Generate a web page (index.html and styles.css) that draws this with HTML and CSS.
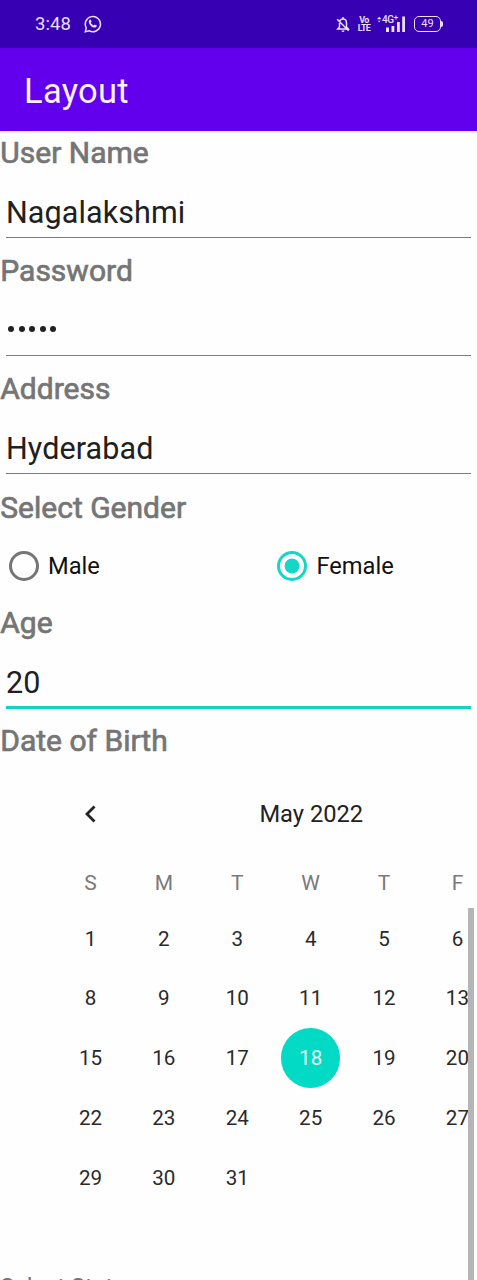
FILE: index.html
```
<!DOCTYPE html>
<html lang="en">
<head>
<meta charset="utf-8">
<title>Layout</title>
<link rel="stylesheet" href="styles.css">
</head>
<body>
<div class="screen">
  <header class="status">
    <span class="clock">3:48</span>
    <svg class="chat" width="18" height="18" viewBox="0 0 18 18" fill="none" stroke="currentColor" stroke-width="1.5">
      <path d="M1.3 16.7l1-3.8a7.6 7.6 0 1 1 2.8 2.8z"/>
      <path d="M5.2 5.2c.7-1 1.4-.9 1.8 0l.6 1.5-.8 1.1c.7 1.3 1.6 2.1 2.9 2.7l1.1-1 1.9 1c.4.3 0 1.3-.7 1.7-1.8 1.2-4.5-.4-5.9-2.3C4.800 8.300 4.400 6.500 5.200 5.200z" fill="currentColor" stroke="none"/>
    </svg>
    <span class="spacer"></span>
    <svg class="bell" width="14" height="17" viewBox="0 0 14 17" fill="none" stroke="currentColor" stroke-width="1.5">
      <path d="M3.500 11V7.200C3.500 4.600 5 3 7 3s3.500 1.600 3.500 4.200V11l1.800 2H1.700l1.800-2zM7 1v2M1.200 3.300l11.400 11.400"/>
      <path d="M5.500 14.600h3a1.500 1.500 0 0 1-3 0z" fill="currentColor" stroke="none"/>
    </svg>
    <span class="volte"><span>Vo</span><span>LTE</span></span>
    <span class="signal">
      <svg width="28" height="18" viewBox="0 0 28 18" fill="currentColor">
        <path d="M0 4.200l2.200-2.400 2.200 2.400zM.8 5.800h2.800l-1.400 1.400z"/>
        <path d="M9 12.500h3V17H9zM14.500 11h2.800v6h-2.800zM20 7h2.800v10H20zM25.200 1.500H28V17h-2.800z"/>
      </svg>
      <span class="net">4G<sup>+</sup></span>
    </span>
    <span class="battery">49</span>
  </header>
  <div class="appbar">Layout</div>
  <main class="form">
    <label class="label">User Name</label>
    <div class="input">Nagalakshmi</div>
    <label class="label">Password</label>
    <div class="input"><span class="dots"><i></i><i></i><i></i><i></i><i></i></span></div>
    <label class="label">Address</label>
    <div class="input">Hyderabad</div>
    <label class="label">Select Gender</label>
    <div class="radios">
      <div class="option"><span class="radio"></span>Male</div>
      <div class="option"><span class="radio on"></span>Female</div>
    </div>
    <label class="label">Age</label>
    <div class="input focus">20</div>
    <label class="label">Date of Birth</label>
    <section class="calendar">
      <div class="month">
        <svg class="prev" width="14" height="20" viewBox="0 0 14 20" fill="none" stroke="currentColor" stroke-width="2.800"><path d="M11.500 2.400L4 10l7.500 7.600"/></svg>
        <span class="title">May 2022</span>
      </div>
      <div class="grid names"><span>S</span><span>M</span><span>T</span><span>W</span><span>T</span><span>F</span></div>
      <div class="grid days">
        <span>1</span><span>2</span><span>3</span><span>4</span><span>5</span><span>6</span>
        <span>8</span><span>9</span><span>10</span><span>11</span><span>12</span><span>13</span>
        <span>15</span><span>16</span><span>17</span><span class="today">18</span><span>19</span><span>20</span>
        <span>22</span><span>23</span><span>24</span><span>25</span><span>26</span><span>27</span>
        <span>29</span><span>30</span><span>31</span>
      </div>
    </section>
    <label class="label plain">Select State</label>
  </main>
  <div class="scrollbar"></div>
</div>
</body>
</html>
```
FILE: styles.css
```
* { box-sizing: border-box; }
body { margin: 0; font-family: Roboto, "Noto Sans", sans-serif; }
.screen {
  position: relative;
  width: 477px;
  height: 1280px;
  overflow: hidden;
  background: #fefefe;
}
.status {
  display: flex;
  align-items: center;
  height: 48px;
  padding: 0 34px 0 35px;
  background: #3700b3;
  color: #e9dfff;
}
.clock { width: 49px; font-size: 18.500px; letter-spacing: 0.1px; }
.spacer { flex: 1; }
.volte {
  display: flex;
  flex-direction: column;
  width: 12px;
  margin: 0 7px 0 8px;
  font: 700 9px/8px Roboto, sans-serif;
  align-items: center;
  letter-spacing: -0.700px;
}
.volte span { white-space: nowrap; }
.signal { position: relative; width: 28px; height: 18px; margin-right: 9px; }
.net {
  position: absolute;
  left: 5px;
  top: 0;
  font-size: 10px;
  line-height: 10px;
  font-weight: 500;
  letter-spacing: -0.4px;
}
.net sup { font-size: 8px; line-height: 0; vertical-align: 3px; }
.battery {
  position: relative;
  width: 27px;
  height: 16px;
  margin-right: 2px;
  border: 1.500px solid currentColor;
  border-radius: 5px;
  font-size: 11px;
  line-height: 14px;
  text-align: center;
}
.battery::after {
  content: "";
  position: absolute;
  right: -3px;
  top: 4px;
  width: 2px;
  height: 6px;
  border-radius: 0 2px 2px 0;
  background: currentColor;
}
.appbar {
  height: 83px;
  padding-left: 24px;
  background: #6200ee;
  color: #f7f0ff;
  font-size: 34.500px;
  line-height: 86px;
  letter-spacing: 0.3px;
}
.form { box-shadow: inset 0 3px 3px -2px #d8cfe4; }
.label {
  display: block;
  height: 44px;
  padding-left: 0.300px;
  color: #757575;
  font-size: 30px;
  line-height: 44.500px;
  -webkit-text-stroke: 0.700px #757575;
}
.label.plain { height: 30px; font-size: 23.600px; line-height: 30px; -webkit-text-stroke: 0; }
.input {
  height: 63px;
  margin: 0 6px 11.200px;
  padding-top: 12px;
  border-bottom: 1.500px solid #7c7c7c;
  color: #202020;
  font-size: 30.500px;
  line-height: 51px;
  letter-spacing: 0.100px;
}
.input.focus { height: 64px; margin-bottom: 10px; border-bottom: 3px solid #18d2c0; }
.dots { display: flex; gap: 4.600px; padding: 21px 0 0 2px; }
.dots i { width: 6px; height: 6px; border-radius: 50%; background: #202020; }
.radios { display: grid; grid-template-columns: 268.400px 1fr; height: 71.200px; padding: 1px 0 0 9px; }
.option { display: flex; align-items: center; gap: 9px; font-size: 23.700px; color: #111; line-height: 30px; }
.radio { width: 30px; height: 30px; border: 3px solid #757575; border-radius: 50%; }
.radio.on {
  border-color: #12d8c5;
  background: radial-gradient(circle, #12d8c5 0 7px, transparent 7.800px);
}
.calendar { width: 515px; margin-left: 53.800px; height: 509px; padding-top: 16px; }
.month { display: grid; grid-template-columns: 73.400px 1fr 73.400px; height: 70px; align-items: center; color: #222; }
.prev { justify-self: center; }
.title { font-size: 23.700px; text-align: center; }
.grid { display: grid; grid-template-columns: repeat(6, 73.400px); text-align: center; }
.names { height: 60px; line-height: 68px; font-size: 21px; color: #7a7a7a; }
.days { grid-auto-rows: 59.700px; line-height: 61px; font-size: 20.600px; color: #2a2a2a; }
.today {
  width: 59.600px;
  height: 59.600px;
  margin: 0 auto;
  border-radius: 50%;
  background: #03dac5;
  color: #e6fffc;
}
.scrollbar { position: absolute; right: 3px; top: 908px; width: 6px; height: 372px; background: #b5b5b5; }
```
